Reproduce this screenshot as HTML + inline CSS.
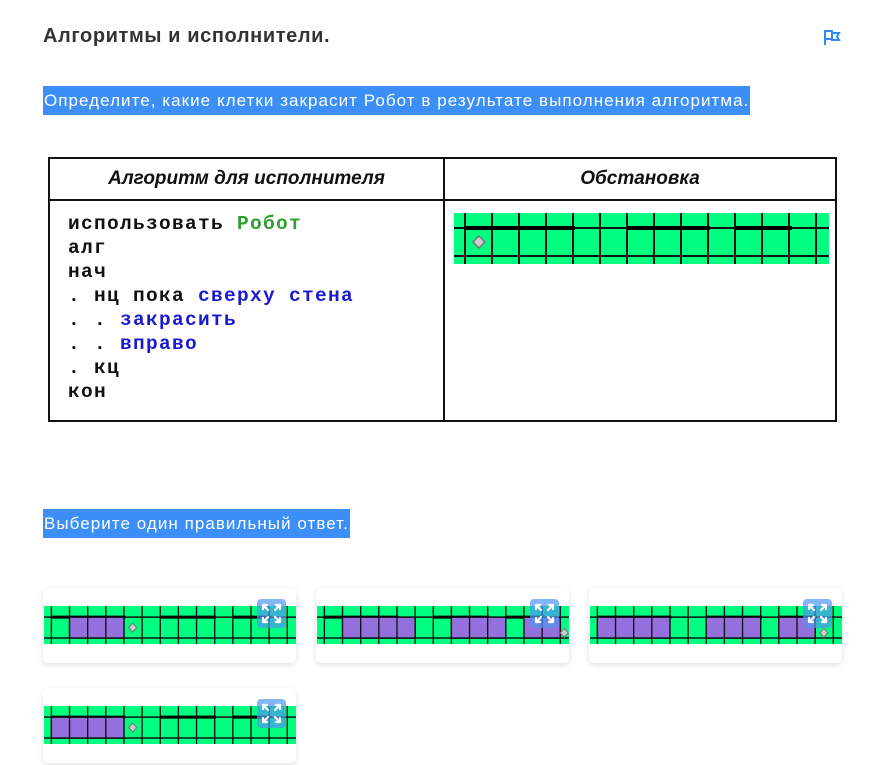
<!DOCTYPE html>
<html><head><meta charset="utf-8"><style>
body{margin:0;width:885px;height:765px;background:#fff;position:relative;overflow:hidden;font-family:"Liberation Sans","DejaVu Sans",sans-serif}
.abs{position:absolute}
h1{position:absolute;left:43px;top:25px;margin:0;font-size:20px;font-weight:600;color:#333;letter-spacing:0.6px}
.hl{position:absolute;left:43px;background:#3b8ff6;color:#fff;font-size:17px;line-height:29px;padding:0 1px;white-space:nowrap;letter-spacing:1.05px}
table{position:absolute;left:48px;top:157px;width:789px;height:265px;border-collapse:collapse}
td,th{border:2px solid #111;padding:0;vertical-align:top}
th{height:40px;font-style:italic;font-weight:bold;font-size:19px;vertical-align:middle;color:#111}
.code{font-family:"Liberation Mono",monospace;font-weight:bold;font-size:19.5px;letter-spacing:1.3px;line-height:24px;padding:11px 0 0 18px;white-space:pre;color:#111}
.g{color:#2ea02e}.b{color:#1a1ad0}
.card{position:absolute;width:253px;height:75px;background:#fff;border-radius:5px;box-shadow:0 2px 6px rgba(0,0,0,0.12)}
.card svg.gr{position:absolute;left:1px;top:18px}
.ex{position:absolute;left:214px;top:11px;width:29px;height:29px;border-radius:4px;background:rgba(80,150,240,0.7)}
</style></head><body>
<h1>Алгоритмы и исполнители.</h1>
<svg class="abs" style="left:823px;top:29px" width="18" height="17" viewBox="0 0 18 17"><path d="M2 1V16M2 2H9V10H2M9 4H16L14 7.5L16 11H9V8" fill="none" stroke="#2f8cf5" stroke-width="2"/></svg>
<div class="hl" style="top:86px">Определите, какие клетки закрасит Робот в результате выполнения алгоритма.</div>
<table><tr><th style="width:393px">Алгоритм для исполнителя</th><th>Обстановка</th></tr>
<tr><td><div class="code">использовать <span class="g">Робот</span>
алг
нач
. нц пока <span class="b">сверху стена</span>
. . <span class="b">закрасить</span>
. . <span class="b">вправо</span>
. кц
кон</div></td><td></td></tr></table>
<svg width="0" height="0" style="position:absolute"><defs>
<g id="grid">
<rect x="0" y="0" width="375" height="51" fill="#00ff80"/>
<g stroke="#111" stroke-width="2">
<path d="M11 0V51M38 0V51M65 0V51M92 0V51M119 0V51M146 0V51M173 0V51M200 0V51M227 0V51M254 0V51M281 0V51M308 0V51M335 0V51M362 0V51M0 15H375M0 43H375"/>
</g>
<path d="M11 15H121M173 15H256M281 15H338" stroke="#000" stroke-width="4"/>
</g>
<path id="rob" d="M0 -6L6 0L0 6L-6 0Z" fill="#ccc" stroke="#777" stroke-width="1.5"/>
<g id="exi" fill="none" stroke="#fff" stroke-width="2.2" stroke-linecap="round"><path d="M6 6L11 11M6 6V10M6 6H10M23 6L18 11M23 6V10M23 6H19M6 23L11 18M6 23V19M6 23H10M23 23L18 18M23 23V19M23 23H19"/></g>
</defs></svg>
<svg class="abs" style="left:454px;top:213px" width="375" height="51" viewBox="0 0 375 51"><use href="#grid"/><use href="#rob" transform="translate(25 29)"/></svg>
<div class="hl" style="top:509px">Выберите один правильный ответ.</div>

<div class="card" style="left:43px;top:588px"><svg class="gr" width="252" height="38" viewBox="0 0 375 51" preserveAspectRatio="none"><use href="#grid"/><g fill="#9370db" stroke="#111" stroke-width="2"><rect x="38" y="15" width="81" height="28"/></g><path d="M65 15V43M92 15V43" stroke="#111" stroke-width="2"/><use href="#rob" transform="translate(132 29)"/></svg><div class="ex"></div></div>

<div class="card" style="left:316px;top:588px"><svg class="gr" width="252" height="38" viewBox="0 0 375 51" preserveAspectRatio="none"><use href="#grid"/><g fill="#9370db" stroke="#111" stroke-width="2"><rect x="38" y="15" width="108" height="28"/><rect x="200" y="15" width="81" height="28"/><rect x="308" y="15" width="54" height="28"/></g><path d="M65 15V43M92 15V43M119 15V43M227 15V43M254 15V43M335 15V43" stroke="#111" stroke-width="2"/><use href="#rob" transform="translate(368 36)"/></svg><div class="ex"></div></div>

<div class="card" style="left:589px;top:588px"><svg class="gr" width="252" height="38" viewBox="0 0 375 51" preserveAspectRatio="none"><use href="#grid"/><g fill="#9370db" stroke="#111" stroke-width="2"><rect x="11" y="15" width="108" height="28"/><rect x="173" y="15" width="81" height="28"/><rect x="281" y="15" width="54" height="28"/></g><path d="M38 15V43M65 15V43M92 15V43M200 15V43M227 15V43M308 15V43" stroke="#111" stroke-width="2"/><use href="#rob" transform="translate(348 36)"/></svg><div class="ex"></div></div>

<div class="card" style="left:43px;top:688px"><svg class="gr" width="252" height="38" viewBox="0 0 375 51" preserveAspectRatio="none"><use href="#grid"/><g fill="#9370db" stroke="#111" stroke-width="2"><rect x="11" y="15" width="108" height="28"/></g><path d="M38 15V43M65 15V43M92 15V43" stroke="#111" stroke-width="2"/><use href="#rob" transform="translate(132 29)"/></svg><div class="ex"></div></div>

<svg class="abs" style="left:257px;top:599px" width="29" height="29"><use href="#exi"/></svg>
<svg class="abs" style="left:530px;top:599px" width="29" height="29"><use href="#exi"/></svg>
<svg class="abs" style="left:803px;top:599px" width="29" height="29"><use href="#exi"/></svg>
<svg class="abs" style="left:257px;top:699px" width="29" height="29"><use href="#exi"/></svg>
</body></html>
